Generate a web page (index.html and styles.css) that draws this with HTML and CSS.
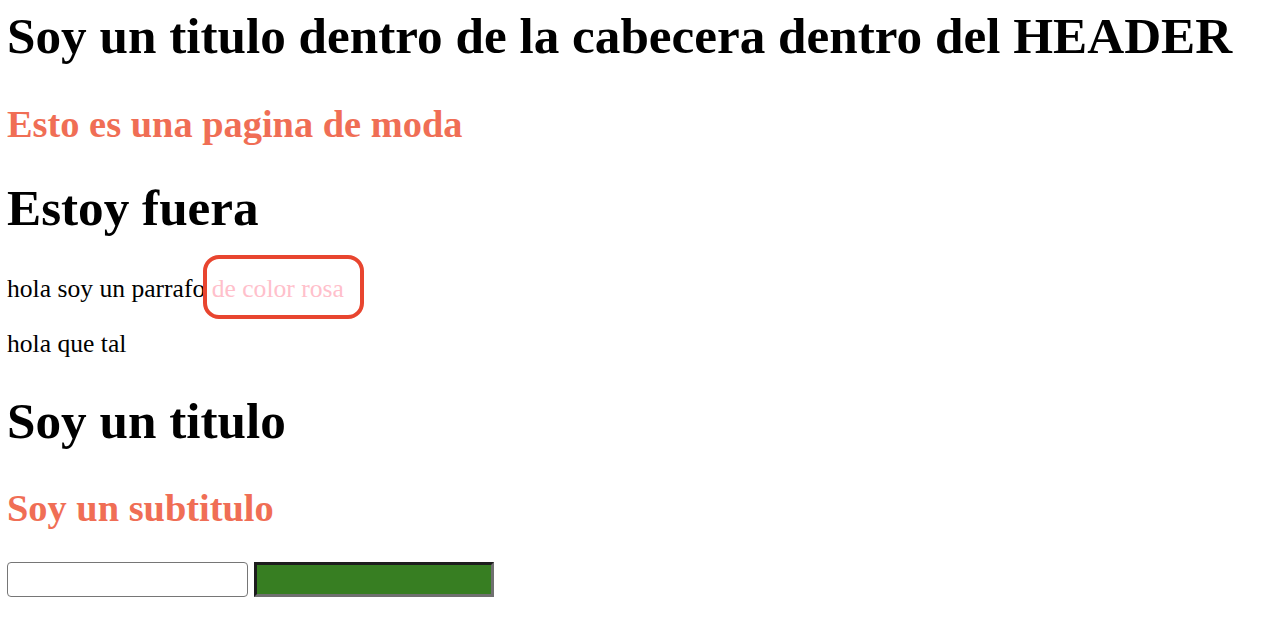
FILE: index.html
```html
<!DOCTYPE html>
<html lang="es">
<head>
<meta charset="utf-8">
<title>Moda</title>
<link rel="stylesheet" href="styles.css">
</head>
<body>
<header class="cabecera">
  <h1 class="titulo titulo-cabecera">Soy un titulo dentro de la cabecera dentro del HEADER</h1>
  <h2 class="subtitulo subtitulo-cabecera">Esto es una pagina de moda</h2>
</header>
<h1 class="titulo titulo-fuera">Estoy fuera</h1>
<p class="parrafo">hola soy un parrafo <span class="rosa">de color rosa</span></p>
<p class="parrafo parrafo-ultimo">hola que tal</p>
<section class="seccion">
  <h1 class="titulo titulo-seccion">Soy un titulo</h1>
  <h2 class="subtitulo subtitulo-seccion">Soy un subtitulo</h2>
</section>
<form class="formulario">
  <input class="campo" type="text">
  <button class="boton" type="button"></button>
</form>
</body>
</html>
```
FILE: styles.css
```css
html {
  background: #ffffff;
}
body {
  margin: 0 7px;
  font-family: "Liberation Serif", "Times New Roman", serif;
  color: #000000;
}
.titulo {
  font-size: 51.2px;
  font-weight: bold;
  margin: 0;
}
.titulo-cabecera {
  margin: 6px 0 37.3px;
}
.titulo-fuera {
  margin-bottom: 37.3px;
}
.titulo-seccion {
  margin-bottom: 36.3px;
}
.subtitulo {
  font-size: 38.4px;
  font-weight: bold;
  color: #f06e55;
  margin: 0;
}
.subtitulo-cabecera {
  margin-bottom: 31.3px;
}
.subtitulo-seccion {
  margin-bottom: 31.9px;
}
.parrafo {
  font-size: 25.6px;
  margin: 0 0 25.6px;
}
.parrafo-ultimo {
  margin-bottom: 31.3px;
}
.rosa {
  position: relative;
  color: #ffc0cb;
}
.rosa::after {
  content: "";
  position: absolute;
  left: -9px;
  right: -20px;
  top: -19px;
  bottom: -16px;
  border: 4px solid #e8452f;
  border-radius: 16px;
}
.formulario {
  display: flex;
  gap: 6px;
  margin: 0;
}
.campo {
  box-sizing: border-box;
  width: 241px;
  height: 35px;
  margin: 0;
  border: 1px solid #767676;
  border-radius: 4px;
  background: #ffffff;
  padding: 0 4px;
}
.boton {
  box-sizing: border-box;
  width: 240px;
  height: 35px;
  margin: 0;
  padding: 0;
  background: #377e22;
  border-style: solid;
  border-width: 3px;
  border-color: #1d1d1d #707070 #707070 #1d1d1d;
}
```
